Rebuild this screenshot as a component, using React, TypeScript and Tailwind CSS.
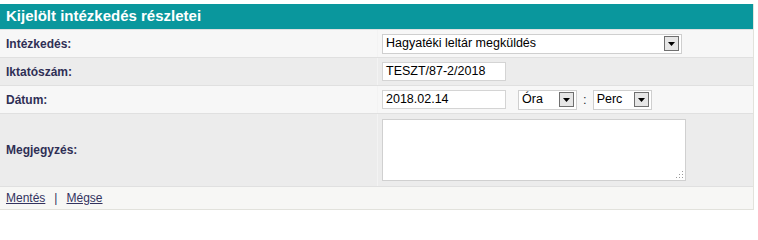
import React from "react";

const font = { fontFamily: '"Liberation Sans", Arial, sans-serif' };

function ArrowBtn() {
  return (
    <span className="flex h-[15px] w-[15px] shrink-0 items-center justify-center border border-[#6f6f6f] bg-[#e6e6e6]">
      <svg width="7" height="4" viewBox="0 0 7 4">
        <path d="M0 0h7L3.5 4z" fill="#000" />
      </svg>
    </span>
  );
}

function Select({ value, className }: { value: string; className: string }) {
  return (
    <div
      className={`flex h-[20px] items-center justify-between border border-[#cfcfcf] bg-white pl-[3px] pr-[2px] text-[12.5px] text-black ${className}`}
    >
      <span className="leading-none">{value}</span>
      <ArrowBtn />
    </div>
  );
}

function Row({
  label,
  bg,
  h,
  children,
}: {
  label: string;
  bg: string;
  h: string;
  children: React.ReactNode;
}) {
  return (
    <div className={`flex border-t border-[#e0e0e0] ${bg} ${h}`}>
      <div className="flex w-[377px] shrink-0 items-center pl-[6px] text-[12px] font-bold text-[#2f2f55]">
        {label}
      </div>
      <div className="flex flex-1 items-center border-l border-[#f3f3f3] pl-[4px]">{children}</div>
    </div>
  );
}

export default function App() {
  return (
    <div className="h-[211px] w-[758px] bg-white pt-[4px]" style={font}>
      <div className="w-[754px] border-r border-b border-[#e2e2dc] bg-[#f7f7f7]">
        <div className="flex h-[25px] items-center bg-[#0a979d] pl-[6px] text-[15px] font-bold text-white">
          Kijelölt intézkedés részletei
        </div>
        <Row label="Intézkedés:" bg="bg-[#f7f7f7]" h="h-[28px]">
          <Select value="Hagyatéki leltár megküldés" className="w-[300px]" />
        </Row>
        <Row label="Iktatószám:" bg="bg-[#ececec]" h="h-[28px]">
          <div className="flex h-[19px] w-[124px] items-center border border-[#d4d4d4] bg-white pl-[3px] text-[12.5px] text-black">
            TESZT/87-2/2018
          </div>
        </Row>
        <Row label="Dátum:" bg="bg-[#f7f7f7]" h="h-[28px]">
          <div className="flex items-center">
            <div className="flex h-[19px] w-[124px] items-center border border-[#d4d4d4] bg-white pl-[3px] text-[12.5px] text-black">
              2018.02.14
            </div>
            <Select value="Óra" className="ml-[12px] w-[59px]" />
            <span className="mx-[6px] text-[13px] text-[#333]">:</span>
            <Select value="Perc" className="w-[59px]" />
          </div>
        </Row>
        <Row label="Megjegyzés:" bg="bg-[#ececec]" h="h-[73px]">
          <div className="relative h-[62px] w-[304px] border border-[#d0d0d0] bg-white">
            <svg className="absolute right-[1px] bottom-[1px]" width="9" height="9" viewBox="0 0 9 9">
              <g fill="#9a9a9a">
                <rect x="7" y="1" width="1" height="1" />
                <rect x="7" y="4" width="1" height="1" />
                <rect x="7" y="7" width="1" height="1" />
                <rect x="4" y="4" width="1" height="1" />
                <rect x="4" y="7" width="1" height="1" />
                <rect x="1" y="7" width="1" height="1" />
              </g>
            </svg>
          </div>
        </Row>
        <div className="flex h-[23px] items-center border-t border-[#e0e0e0] bg-[#f7f7f5] pl-[6px] text-[12px] text-[#33335f]">
          <a className="underline">Mentés</a>
          <span className="mx-[9px]">|</span>
          <a className="underline">Mégse</a>
        </div>
      </div>
    </div>
  );
}
